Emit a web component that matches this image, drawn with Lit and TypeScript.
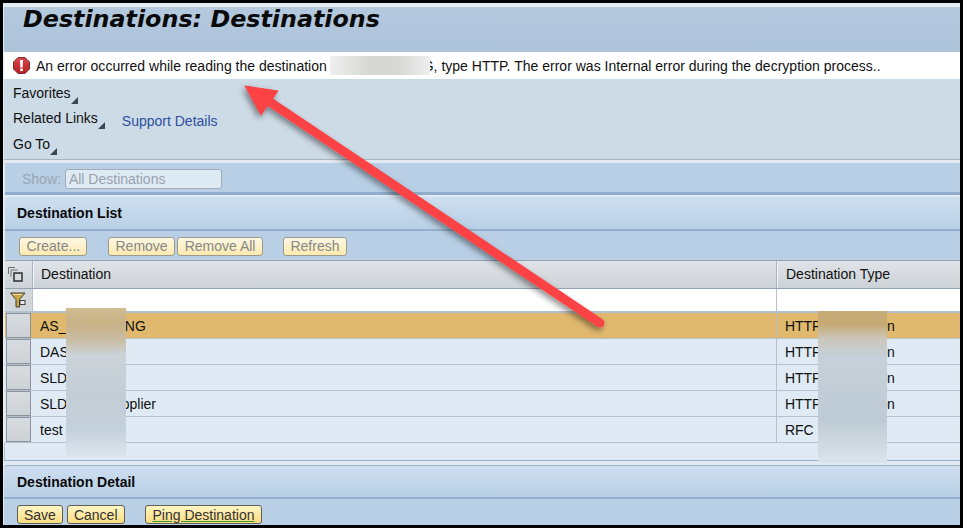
import { LitElement, html, css, svg } from "lit";
import { customElement } from "lit/decorators.js";

const rows = [
  { name: "AS_MMMMMNG", type: "HTTP Connection", selected: true },
  { name: "DASXXXXX", type: "HTTP Connection" },
  { name: "SLDXXXXX", type: "HTTP Connection" },
  { name: "SLDXXXXXupplier", type: "HTTP Connection" },
  { name: "test", type: "RFC" },
];

@customElement("app-root")
export class AppRoot extends LitElement {
  static styles = css`
    :host {
      display: block;
      position: relative;
      box-sizing: border-box;
      width: 963px;
      height: 528px;
      overflow: hidden;
      background: #e4ebf1;
      border: 3px solid #000;
      padding: 4px 0 0 1px;
      font: 14px "Liberation Sans", Arial, sans-serif;
      color: #101010;
    }
    .title {
      height: 45px;
      box-sizing: border-box;
      background: linear-gradient(#b4c9de, #adc3da);
      padding: 0 0 0 19px;
      font: italic bold 23.8px/24px "DejaVu Sans", sans-serif;
      color: #0a0a0a;
    }
    .msg {
      height: 27px;
      background: #fff;
      display: flex;
      align-items: center;
      gap: 6px;
      padding-left: 9px;
      white-space: nowrap;
      color: #111;
      letter-spacing: 0.012px;
    }
    .menus {
      height: 81px;
      box-sizing: border-box;
      background: #cddbe6;
      border-bottom: 1px solid #a7b6c5;
      padding: 6px 0 0 9px;
      display: flex;
      flex-direction: column;
      gap: 8px;
    }
    .menu {
      height: 17px;
      line-height: 17px;
      display: flex;
    }
    .menu.last { margin-top: 1px; }
    .tri {
      width: 7px;
      height: 7px;
      margin: 12px 0 0 0;
      flex: none;
    }
    .link {
      color: #2f4f9f;
      margin: 3px 0 0 17px;
    }
    .gap {
      height: 3px;
      background: #e2eaf1;
    }
    .show {
      height: 32px;
      box-sizing: border-box;
      background: #b8cfe5;
      border-bottom: 3px solid #90adcc;
      margin-left: 1px;
      padding: 6px 0 0 17px;
      display: flex;
      align-items: flex-start;
      gap: 4px;
      color: #9aa7b3;
    }
    .show span { margin-top: 2px; }
    .field {
      width: 157px;
      height: 20px;
      box-sizing: border-box;
      border: 1px solid #a3acb6;
      border-radius: 3px;
      background: #deeaf4;
      padding-left: 3px;
      line-height: 19px;
      color: #97a2ad;
    }
    .panelhead {
      height: 35px;
      box-sizing: border-box;
      margin: 1px 0 0 1px;
      border-radius: 4px 0 0 0;
      background: linear-gradient(#cfdff0, #b8cfe5);
      border-top: 1px solid #e2ebf3;
      border-bottom: 2px solid #93afcd;
      padding-left: 12px;
      display: flex;
      align-items: center;
      font-weight: bold;
      color: #0a0a0a;
    }
    .panelhead.second {
      height: 34px;
      margin-left: 0;
      padding-left: 13px;
      border-top-color: #9db3c9;
    }
    .toolbar {
      background: #b8cfe5;
      margin-left: 1px;
      height: 29px;
      box-sizing: border-box;
      display: flex;
      gap: 2px;
      padding: 6px 0 0 14px;
    }
    .toolbar.second {
      height: 26px;
      margin-left: 0;
      padding-left: 13px;
      gap: 4px;
    }
    .btn {
      height: 19px;
      box-sizing: border-box;
      border: 1px solid #9b9b8c;
      border-radius: 3px;
      background: linear-gradient(#fdf8e3, #fbe9ae);
      color: #87878a;
      line-height: 17px;
      text-align: center;
      padding: 0 6.5px;
    }
    .btn.create { width: 68px; }
    .btn.on {
      color: #333;
      border-color: #5f5f55;
      background: linear-gradient(#fff5c4, #fbdd82);
      line-height: 18px;
      padding: 0 6px;
    }
    .btn.on.ping {
      padding: 0 7px;
      text-decoration: underline;
      text-decoration-color: #3a9a3a;
    }
    .sp { margin-left: 19px; }
    .sp2 { margin-left: 18px; }
    .sp3 { margin-left: 16px; }
    .hd, .flt, .row {
      display: grid;
      grid-template-columns: 27px 744px 1fr;
      margin-left: 1px;
    }
    .hd {
      height: 29px;
      background: linear-gradient(#e0e4e8, #cdd2d6);
      border-top: 1px solid #94a2b2;
      border-bottom: 1px solid #94a2b2;
      box-sizing: border-box;
    }
    .hd > div {
      line-height: 26px;
      padding-left: 8px;
      border-left: 1px solid #a9b4bf;
      box-shadow: inset 1px 0 0 #f0f3f6;
    }
    .hd > div:nth-child(3) { padding-left: 9px; }
    .hd > .ic, .flt > .ic {
      padding: 0 0 0 3px;
      border: 0;
      box-shadow: none;
      display: flex;
      align-items: center;
    }
    .flt { height: 22px; background: #fff; }
    .flt > div { border-left: 1px solid #b2c3d6; }
    .flt > .ic { background: #d2d7dc; padding-left: 5px; }
    .row {
      height: 26px;
      box-sizing: border-box;
      background: #dfeaf4;
      border-bottom: 1px solid #b3c1cf;
      line-height: 26px;
      white-space: nowrap;
    }
    .row.first { border-top: 2px solid #b3c1cf; height: 28px; }
    .row.sel { background: #e0b96e; }
    .row > div { padding-left: 8px; }
    .row > .ty { border-left: 1px solid #b3c1cf; letter-spacing: -0.08px; }
    .row > .sq {
      padding: 0;
      background: linear-gradient(#d8dce0, #cdd2d6);
      border: 1px solid #8d9399;
      margin-left: 1px;
      box-sizing: border-box;
      width: 25px;
      height: 25px;
    }
    .empty { height: 17px; background: #dfeaf4; border-bottom: 1px solid #93afcd; border-left: 1px solid #b3c1cf; }
    .gap2 { height: 3px; background: #e2eaf1; }
    .arrow { position: absolute; left: -3px; top: -3px; width: 963px; height: 528px; pointer-events: none; }
    .blur { position: absolute; }
    .b1 { left: 327px; top: 53px; width: 100px; height: 19px; background: linear-gradient(90deg, #efefef, #d6d6d4 40%, #d8d8d6 70%, #efefef); }
    .b2 { left: 63px; top: 305px; width: 60px; height: 148px; background: linear-gradient(#d2bd94, #c7b084 10%, #c9bea6 22%, #ccd3d9 32%, #c3cdd6 60%, #c4d0da 82%, #dbe5ee); }
    .b3 { left: 815px; top: 308px; width: 69px; height: 152px; background: linear-gradient(#c8ad78, #c5aa76 9%, #cbc6b8 18%, #c5d0d9 30%, #bfcbd4 72%, #dae4ed); }
  `;

  private tri() {
    return html`<svg class="tri" viewBox="0 0 7 7"><path d="M7 0V7H0Z" fill="#3c4650"/></svg>`;
  }

  private errorIcon() {
    return html`<svg width="17" height="17" viewBox="0 0 17 17" style="flex:none">
      <defs><linearGradient id="er" x1="0" y1="0" x2="0" y2="1"><stop offset="0" stop-color="#d9474a"/><stop offset="1" stop-color="#b32024"/></linearGradient></defs>
      <path d="M5 .5h7l4.500 4.500v7l-4.500 4.500H5L.5 12V5z" fill="url(#er)" stroke="#7f2a30"/>
      <path d="M7 3h3l-.4 7.500H7.400z" fill="#fff"/>
      <rect x="7.200" y="11.500" width="2.600" height="2.600" fill="#fff"/>
    </svg>`;
  }

  render() {
    return html`
      <div class="title">Destinations: Destinations</div>
      <div class="msg">${this.errorIcon()}<span>An error occurred while reading the destination AS_XXXXXXNG, type HTTP. The error was Internal error during the decryption process..</span></div>
      <div class="menus">
        <div class="menu">Favorites${this.tri()}</div>
        <div class="menu">Related Links${this.tri()}<span class="link">Support Details</span></div>
        <div class="menu last">Go To${this.tri()}</div>
      </div>
      <div class="gap"></div>
      <div class="show"><span>Show:</span><div class="field">All Destinations</div></div>
      <div class="panelhead">Destination List</div>
      <div class="toolbar">
        <div class="btn create">Create...</div>
        <div class="btn sp">Remove</div>
        <div class="btn">Remove All</div>
        <div class="btn sp2">Refresh</div>
      </div>
      <div class="hd">
        <div class="ic">
          <svg width="15" height="15" viewBox="0 0 15 15">
            <path d="M.5 7V.5H7M3 9.500V3H9.500" fill="none" stroke="#6e6e6e"/>
            <rect x="6" y="6" width="8" height="8" fill="#d6dade" stroke="#2e2e2e" stroke-width="1.500"/>
          </svg>
        </div>
        <div>Destination</div>
        <div>Destination Type</div>
      </div>
      <div class="flt">
        <div class="ic">
          <svg width="16" height="16" viewBox="0 0 16 16">
            <path d="M.5 1h14.500L9.500 7.500V15H6V7.500z" fill="#cba544" stroke="#3f3f38"/>
            <path d="M2.500 2.500h10" stroke="#f1dfa0"/>
            <rect x="10" y="8.500" width="5" height="4" fill="#e8ebee" stroke="#3f3f38"/>
          </svg>
        </div>
        <div></div><div></div>
      </div>
      ${rows.map(
        (r, i) => html`<div class="row ${r.selected ? "sel" : ""} ${i === 0 ? "first" : ""}">
          <div class="sq"></div><div>${r.name}</div><div class="ty">${r.type}</div>
        </div>`
      )}
      <div class="empty"></div>
      <div class="gap2"></div>
      <div class="panelhead second">Destination Detail</div>
      <div class="toolbar second">
        <div class="btn on">Save</div>
        <div class="btn on">Cancel</div>
        <div class="btn on ping sp3">Ping Destination</div>
      </div>
      <div class="blur b1"></div>
      <div class="blur b2"></div>
      <div class="blur b3"></div>
      <svg class="arrow" viewBox="0 0 963 528">
        ${svg`<defs><filter id="s" x="-10%" y="-10%" width="120%" height="120%"><feDropShadow dx="-2" dy="3" stdDeviation="3" flood-color="#000" flood-opacity=".45"/></filter></defs>
        <g filter="url(#s)" fill="#fb4245" stroke="#fb4245">
          <path d="M600 323L267 100" stroke-width="9" stroke-linecap="round"/>
          <path d="M245 86L278 91L261 115Z" stroke-width="1"/>
        </g>`}
      </svg>
    `;
  }
}
